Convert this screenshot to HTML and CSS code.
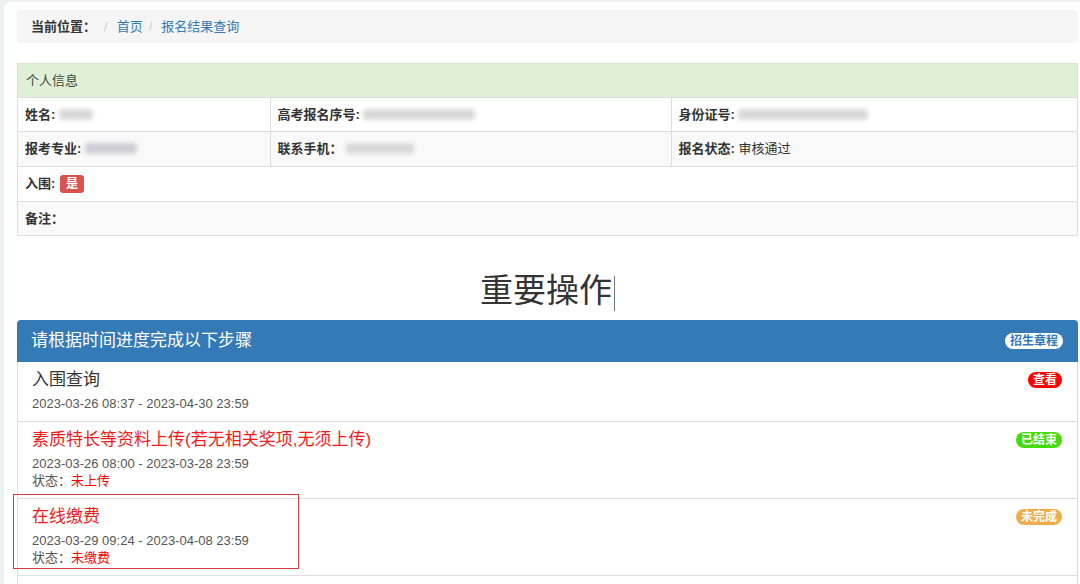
FILE: index.html
```html
<!DOCTYPE html>
<html lang="zh-CN">
<head>
  <meta charset="UTF-8" />
  <meta name="viewport" content="width=device-width, initial-scale=1.0"/>
  <title>报名结果查询</title>
  <link rel="stylesheet" href="styles.css">
</head>
<body>
  <div class="page">
    <ol class="crumb">
      <li class="crumb-label">当前位置：</li>
      <li><a href="#">首页</a></li>
      <li><a href="#">报名结果查询</a></li>
    </ol>

    <div class="info-panel">
      <div class="info-head">个人信息</div>
      <table class="info-table">
        <colgroup>
          <col class="col-a">
          <col class="col-b">
          <col>
        </colgroup>
        <tr>
          <td><b>姓名:</b> <span class="masked masked-name"></span></td>
          <td><b>高考报名序号:</b> <span class="masked masked-seq"></span></td>
          <td><b>身份证号:</b> <span class="masked masked-id"></span></td>
        </tr>
        <tr class="striped">
          <td><b>报考专业:</b> <span class="masked masked-major"></span></td>
          <td><b>联系手机：</b> <span class="masked masked-phone"></span></td>
          <td><b>报名状态:</b> 审核通过</td>
        </tr>
        <tr>
          <td colspan="3"><b>入围:</b> <span class="label-danger">是</span></td>
        </tr>
        <tr class="striped">
          <td colspan="3"><b>备注：</b></td>
        </tr>
      </table>
    </div>

    <h2 class="ops-title">重要操作<span class="caret"></span></h2>

    <div class="steps">
      <div class="steps-head">
        <span>请根据时间进度完成以下步骤</span>
        <span class="pill pill-white">招生章程</span>
      </div>
      <div class="step">
        <span class="pill pill-red">查看</span>
        <div class="step-title">入围查询</div>
        <div class="step-meta">2023-03-26 08:37 - 2023-04-30 23:59</div>
      </div>
      <div class="step">
        <span class="pill pill-green">已结束</span>
        <div class="step-title warn">素质特长等资料上传(若无相关奖项,无须上传)</div>
        <div class="step-meta">2023-03-26 08:00 - 2023-03-28 23:59</div>
        <div class="step-meta">状态：<span class="warn">未上传</span></div>
      </div>
      <div class="step step-marked">
        <span class="pill pill-orange">未完成</span>
        <div class="step-title warn">在线缴费</div>
        <div class="step-meta">2023-03-29 09:24 - 2023-04-08 23:59</div>
        <div class="step-meta">状态：<span class="warn">未缴费</span></div>
        <div class="mark-box"></div>
      </div>
      <div class="step step-empty"></div>
    </div>
  </div>
</body>
</html>
```

FILE: styles.css
```css
html, body {
  margin: 0;
  padding: 0;
  background: #ebf0f3;
  font-family: "Liberation Sans", "Noto Sans CJK SC", sans-serif;
  color: #333;
}
.page {
  margin: 2px 0 0 4px;
  padding: 8px 2px 0 13px;
  background: #fff;
  border-radius: 6px 0 0 0;
  min-height: 700px;
}
a {
  color: #337ab7;
  text-decoration: none;
}
.crumb {
  list-style: none;
  margin: 0 0 20px;
  padding: 8px 14px;
  background: #f5f5f5;
  border-radius: 4px;
  display: flex;
  font-size: 13px;
  line-height: 17px;
}
.crumb li + li::before {
  content: "/";
  color: #ccc;
  padding: 0 9px 0 6px;
}
.crumb-label {
  font-weight: bold;
  margin-right: 2px;
}
.info-panel {
  border: 1px solid #ddd;
  border-top: 0;
}
.info-head {
  background: #dff0d8;
  border-top: 1px solid #d6e9c6;
  padding: 8px;
  font-size: 13px;
  line-height: 17px;
  color: #3a4a3a;
}
.info-table {
  width: 100%;
  border-collapse: collapse;
  font-size: 13px;
}
.info-table td {
  border-top: 1px solid #ddd;
  border-left: 1px solid #ddd;
  padding: 8px 7px;
  line-height: 17.3px;
}
.info-table td:first-child {
  border-left: 0;
}
.col-a { width: 252px; }
.col-b { width: 401px; }
.striped td {
  background: #f9f9f9;
}
.masked {
  display: inline-block;
  height: 11px;
  vertical-align: -1px;
  background: #d9d9d9;
  filter: blur(2px);
  border-radius: 4px;
}
.masked-name { width: 34px; }
.masked-seq { width: 112px; }
.masked-id { width: 130px; }
.masked-major { width: 52px; background: #cfcdd6; }
.masked-phone { width: 68px; }
.label-danger {
  display: inline-block;
  background: #d9534f;
  color: #fff;
  font-weight: bold;
  font-size: 12px;
  line-height: 16px;
  padding: 1px 6px;
  border-radius: 3px;
  margin-left: 1px;
}
.ops-title {
  margin: 35px 0 9px;
  text-align: center;
  font-size: 33px;
  line-height: 40px;
  font-weight: normal;
  color: #333;
}
.caret {
  display: inline-block;
  width: 0;
  height: 35px;
  border-left: 1px solid #777;
  vertical-align: middle;
  margin-left: 2px;
}
.steps {
  border-radius: 4px 4px 0 0;
}
.steps-head {
  background: #337ab7;
  color: #fff;
  border-radius: 4px 4px 0 0;
  padding: 10px 15px 10px 14px;
  font-size: 17px;
  line-height: 22px;
  display: flex;
  justify-content: space-between;
  align-items: center;
}
.pill {
  display: inline-block;
  font-size: 12px;
  font-weight: bold;
  line-height: 16px;
  padding: 0 5px;
  border-radius: 8px;
  color: #fff;
}
.pill-white {
  background: #fff;
  color: #337ab7;
}
.pill-red { background: #f00; }
.pill-green { background: #44dc06; }
.pill-orange { background: #f0ad4e; }
.step {
  position: relative;
  border: 1px solid #ddd;
  border-top: 0;
  padding: 7px 15px 9px 14px;
}
.step .pill {
  float: right;
  margin-top: 3px;
}
.step-title {
  font-size: 17px;
  line-height: 22px;
  margin-bottom: 4px;
  color: #333;
}
.step-meta {
  font-size: 13px;
  line-height: 17px;
  color: #555;
}
.warn {
  color: #f00;
}
.step-title.warn {
  color: #f51a1a;
}
.step-empty {
  height: 60px;
}
.mark-box {
  position: absolute;
  left: -5px;
  top: -5px;
  width: 284px;
  height: 73px;
  border: 1px solid #e3373c;
}
```
